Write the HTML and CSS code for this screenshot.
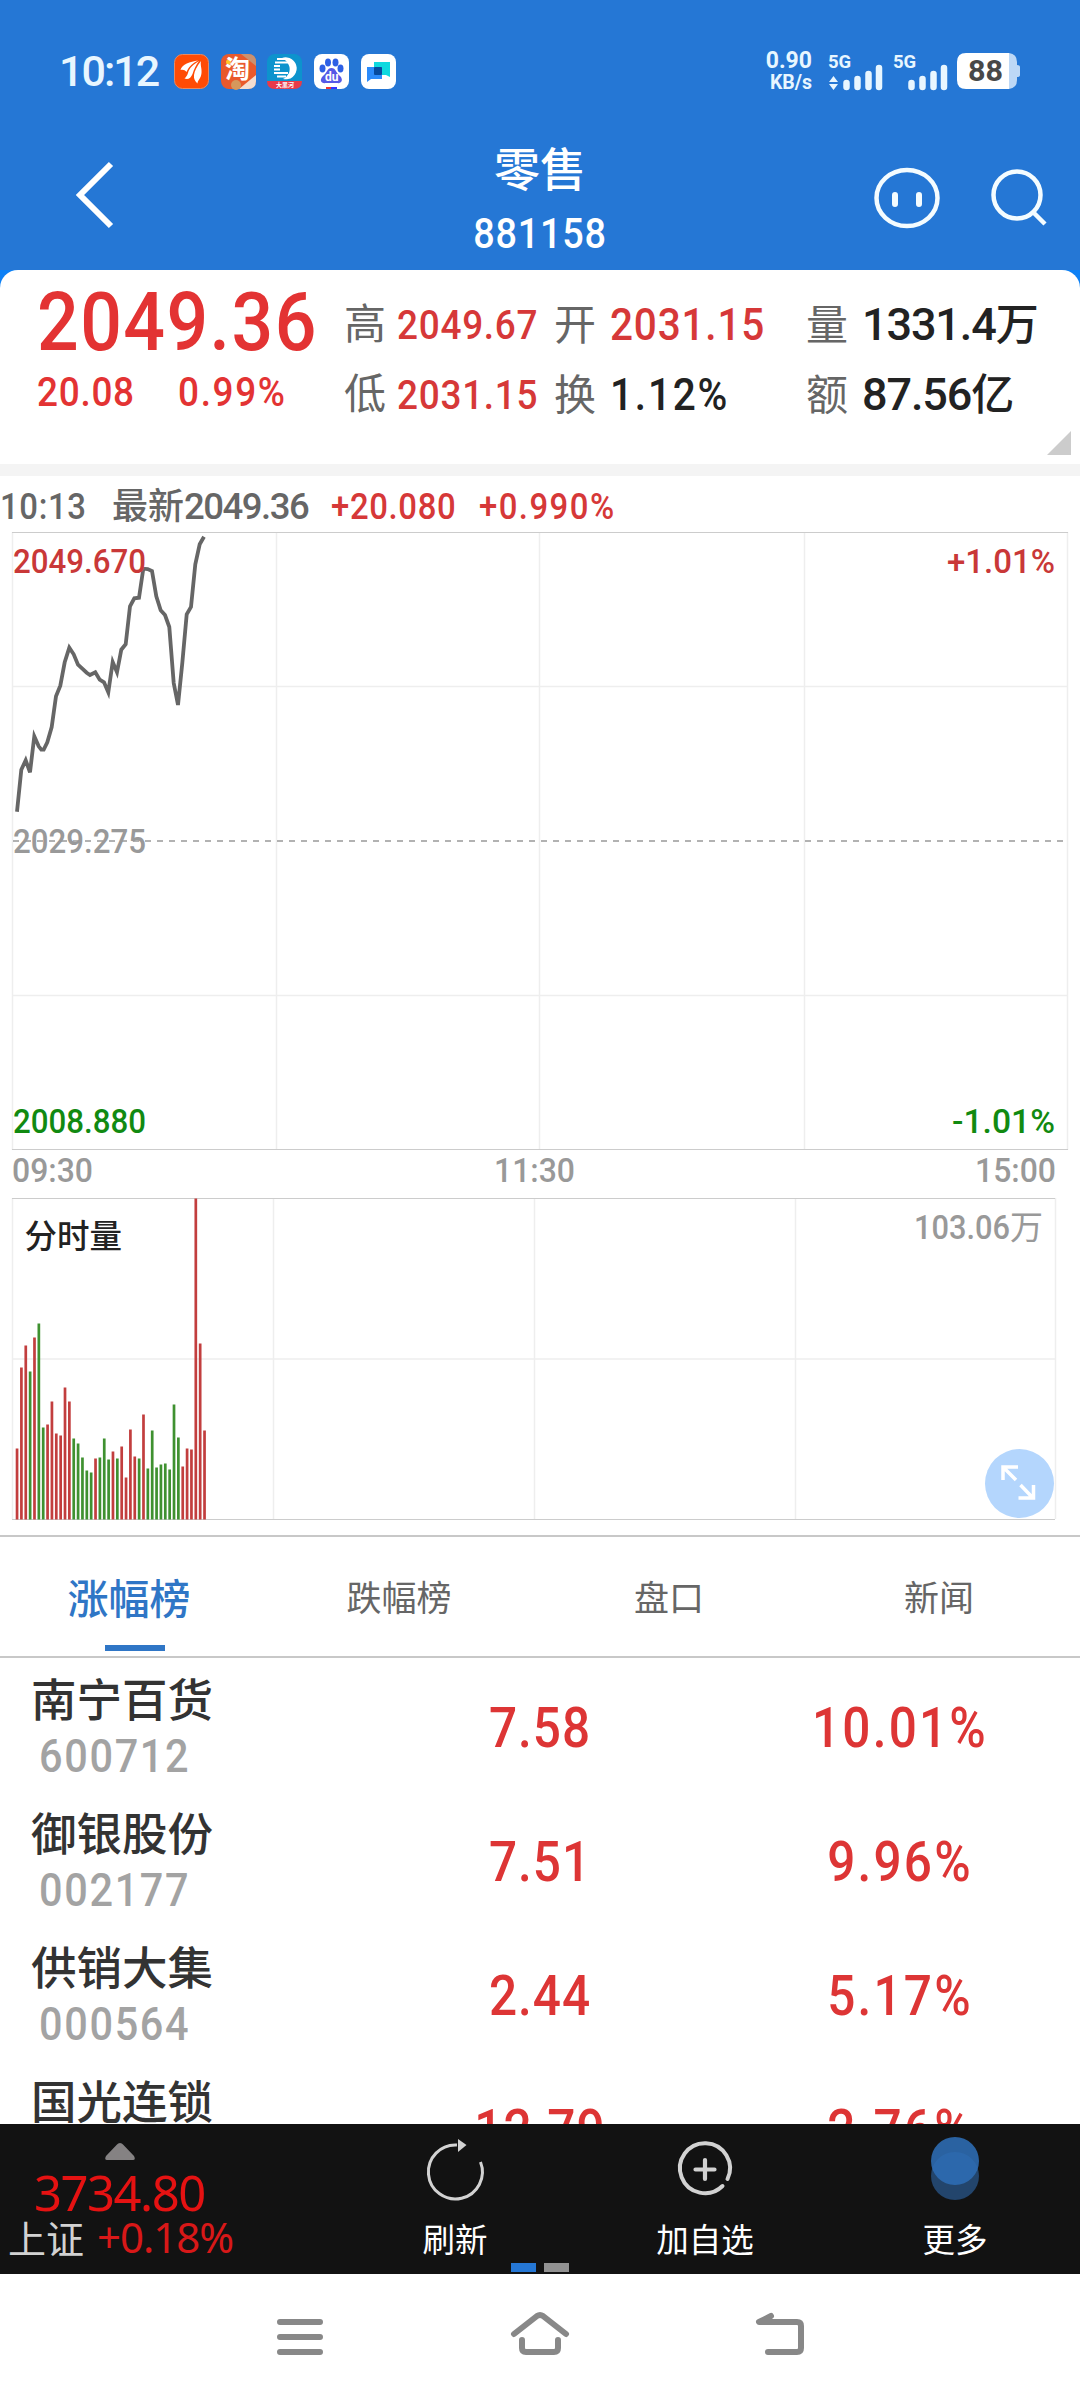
FILE: index.html
```html
<!DOCTYPE html>
<html lang="zh-CN">
<head>
    <meta charset="UTF-8">
    <meta name="viewport" content="width=device-width, initial-scale=1.0">
    <title>零售 881158</title>
    <link rel="stylesheet" href="styles.css">
</head>
<body>
    <header class="header">
        <div class="status">
            <span class="clock">10:12</span>
            <div class="apps">
                <svg width="35" height="35" viewBox="0 0 35 35">
                    <rect x=".5" y=".5" width="34" height="34" rx="8" fill="#ff4b05" stroke="#e98a62"/>
                    <path d="M6.500 16C8 10 16 8 24 6.500C19 9 15 12 12.500 18C11 16 9 15.500 6.500 16Z" fill="#fff"/>
                    <path d="M25 7C20 10 15 14 14 19C13 22 12 23 10.500 24.500C14 26 17 24 18.500 20C20 15 22 11 25 7Z" fill="#fff"/>
                    <path d="M27 7C23 12 20.500 17 20 21C19.500 25 21 27 23.500 29.500C23.500 26 27 25 27.500 19C28 14 26 11 27 7Z" fill="#fff"/>
                </svg>
                <svg width="35" height="35" viewBox="0 0 35 35">
                    <rect width="35" height="35" rx="8" fill="#e9592c"/>
                    <path d="M20 0H27Q35 0 35 8V12Z" fill="#c99170"/>
                    <path d="M35 21V27Q35 35 27 35H18Z" fill="#f3ddd2"/>
                    <circle cx="15" cy="31" r="5" fill="#d6985c"/>
                    <circle cx="7.500" cy="8" r="2.500" fill="#ffc629"/>
                    <text class="tao" x="4" y="24">淘</text>
                </svg>
                <svg width="35" height="35" viewBox="0 0 35 35">
                    <rect width="35" height="35" rx="8" fill="#0d93cd"/>
                    <path d="M0 27H35Q35 35 27 35H8Q0 35 0 27Z" fill="#e83a49"/>
                    <path d="M15 4A11 11 0 1 1 16 25C19 24 20 22 22 19C24 14 22 8 15 4Z" fill="#fff"/>
                    <path d="M10 5H20M8 8.500H21M7 12H13M7 15.500H13M7 19H21M10 22.500H19" stroke="#fff" stroke-width="1.800"/>
                    <text class="tiny" x="9" y="33">大黑河</text>
                </svg>
                <svg width="35" height="35" viewBox="0 0 35 35">
                    <rect width="35" height="35" rx="8" fill="#fff"/>
                    <g fill="#2d5fe5">
                        <ellipse cx="8.500" cy="14.500" rx="3" ry="4"/>
                        <ellipse cx="14" cy="8.500" rx="3" ry="4"/>
                        <ellipse cx="21.500" cy="8.500" rx="3" ry="4"/>
                        <ellipse cx="26.500" cy="14.500" rx="3" ry="4"/>
                        <path d="M17.500 14C22 14 22 19 26 22C30 26 27 30 23 29H12C7 30 5 26 9 22C13 19 13 14 17.500 14Z" fill="#5558e6"/>
                    </g>
                    <text class="du" x="11" y="27">du</text>
                    <path d="M12 34H17" stroke="#e33" stroke-width="2"/>
                    <path d="M17 34H23" stroke="#33f" stroke-width="2"/>
                </svg>
                <svg width="35" height="35" viewBox="0 0 35 35">
                    <rect width="35" height="35" rx="8" fill="#fff"/>
                    <path d="M13 8H29V23L25 21H13Z" fill="#0fd9df"/>
                    <path d="M6 13H21V25H10L6 28Z" fill="#2b8bfb"/>
                    <rect x="13" y="13" width="8" height="8" rx="1" fill="#064a9e"/>
                </svg>
            </div>
            <div class="speed"><span>0.90</span><small>KB/s</small></div>
            <svg class="signal" width="54" height="38" viewBox="0 0 54 38">
                <text class="net" x="0" y="15.500">5G</text>
                <path d="M5.500 24L10 30H1ZM5.500 38L10 32H1Z" fill="#e8f6ff"/>
                <path d="M18.500 31V35M29.500 27V35M40.500 22V35M51 16V35" class="bars"/>
            </svg>
            <svg class="signal second" width="54" height="38" viewBox="0 0 54 38">
                <text class="net" x="0" y="15.500">5G</text>
                <path d="M18.500 31V35M29.500 27V35M40.500 22V35M51 16V35" class="bars"/>
            </svg>
            <svg class="battery" width="63" height="36" viewBox="0 0 63 36">
                <path d="M52 0Q60 1 60 9V12Q63 12 63 14V22Q63 24 60 24V27Q60 35 52 36Z" fill="#bdd8f6"/>
                <path d="M52 0H9Q0 0 0 9V27Q0 36 9 36H52Z" fill="#fff"/>
                <text x="11" y="28" textLength="35" lengthAdjust="spacingAndGlyphs">88</text>
            </svg>
        </div>
        <div class="titlebar">
            <svg class="back" width="40" height="68" viewBox="0 0 40 68">
                <path d="M36 3L5 34L36 65"/>
            </svg>
            <div class="title">
                <h1>零售</h1>
                <span class="num">881158</span>
            </div>
            <svg class="face" width="68" height="64" viewBox="0 0 68 64">
                <ellipse cx="34" cy="32" rx="30.500" ry="28"/>
                <path d="M22 29V38M46 29V38" stroke-width="6" stroke-linecap="round"/>
            </svg>
            <svg class="search" width="58" height="58" viewBox="0 0 58 58">
                <circle cx="27" cy="27" r="23.500"/>
                <path d="M43 44L55 56"/>
            </svg>
        </div>
    </header>

    <div class="corners">
        <section class="quote">
            <div class="last">
                <div class="price num">2049.36</div>
                <div class="change"><span class="num">20.08</span><span class="num pct">0.99%</span></div>
            </div>
            <dl class="stats">
                <div class="stat small"><dt>高</dt><dd class="num red">2049.67</dd></div>
                <div class="stat"><dt>开</dt><dd class="num red">2031.15</dd></div>
                <div class="stat"><dt>量</dt><dd class="unit">1331.4<i>万</i></dd></div>
                <div class="stat small"><dt>低</dt><dd class="num red">2031.15</dd></div>
                <div class="stat"><dt>换</dt><dd class="num pct">1.12%</dd></div>
                <div class="stat"><dt>额</dt><dd class="unit">87.56<i>亿</i></dd></div>
            </dl>
            <svg class="expand" width="24" height="24" viewBox="0 0 24 24"><path d="M24 0V24H0Z" fill="#ccc"/></svg>
        </section>
    </div>

    <div class="latest">
        <span class="num time">10:13</span>
        <span class="now"><i>最新</i>2049.36</span>
        <span class="num red diff">+20.080</span>
        <span class="num red pct">+0.990%</span>
    </div>

    <svg class="chart" width="1080" height="666" viewBox="0 0 1080 666">
        <path class="grid" d="M12.500 0V618M276.500 0V618M539.500 0V618M804.500 0V618M1067.500 0V618M13 154.500H1067M13 463.500H1067"/>
        <path class="frame" d="M12 .5H1068M12 617.500H1068"/>
        <path class="middle" d="M13 309H1067"/>
        <polyline class="line" points="17,279.700 21.300,237.700 25.700,228.300 30,240.300 34.300,204.300 38.700,214.300 41.300,217.700 43.700,217.700 47.300,210.300 51.700,195 56,164.300 60.300,153.700 64.700,130.300 69.300,115.700 73.700,122.300 78,132.700 82.300,136.700 86.700,140.700 90,143 95.300,140.300 99.700,147.700 104,150.300 108.300,160.300 112.700,130 117,140.300 121.300,117.700 125.700,112.300 130,74.300 134.300,66.300 139,65.700 143.300,36.700 147.700,37 152,39 156.300,64.300 160.700,78.300 165,83 169.300,95 173.700,151 178,173 182.300,131 186.700,82.300 191,75 195.300,32.300 199.700,12.300 204,4.700"/>
        <text x="13" y="40.500" textLength="133" lengthAdjust="spacingAndGlyphs" class="high">2049.670</text>
        <text x="13" y="320.500" textLength="133" lengthAdjust="spacingAndGlyphs">2029.275</text>
        <text x="13" y="600.500" textLength="133" lengthAdjust="spacingAndGlyphs" class="low">2008.880</text>
        <text x="947" y="40.500" textLength="108" lengthAdjust="spacingAndGlyphs" class="high">+1.01%</text>
        <text x="952" y="600.500" textLength="103" lengthAdjust="spacingAndGlyphs" class="low">-1.01%</text>
        <text x="12" y="649.500" textLength="81" lengthAdjust="spacingAndGlyphs">09:30</text>
        <text x="494" y="649.500" textLength="81" lengthAdjust="spacingAndGlyphs">11:30</text>
        <text x="975" y="649.500" textLength="81" lengthAdjust="spacingAndGlyphs">15:00</text>
    </svg>

    <svg class="chart" width="1080" height="337" viewBox="0 0 1080 337">
        <path class="grid" d="M12.500 0V321M273.500 0V321M534.500 0V321M795.500 0V321M1055.500 0V321M13 161H1055"/>
        <path class="frame" d="M12 .5H1055M12 321.500H1055"/>
        <g id="volume"></g>
        <text class="name" x="24.500" y="50">分时量</text>
        <text x="914" y="41" textLength="96" lengthAdjust="spacingAndGlyphs">103.06</text>
        <text class="wan" x="1010" y="41">万</text>
        <circle cx="1019.500" cy="285.500" r="34.500" fill="#b4d6fd"/>
        <path class="zoom" d="M1018 269H1003V282M1004 270L1016 282M1018.500 300H1033.500V287M1032 299L1020.500 287"/>
    </svg>

    <nav class="tabs">
        <a class="active">涨幅榜</a>
        <a>跌幅榜</a>
        <a>盘口</a>
        <a>新闻</a>
    </nav>

    <main class="list">
        <div class="row">
            <div class="stock"><b>南宁百货</b><span class="num">600712</span></div>
            <span class="num val">7.58</span>
            <span class="num pct val">10.01%</span>
        </div>
        <div class="row">
            <div class="stock"><b>御银股份</b><span class="num">002177</span></div>
            <span class="num val">7.51</span>
            <span class="num pct val">9.96%</span>
        </div>
        <div class="row">
            <div class="stock"><b>供销大集</b><span class="num">000564</span></div>
            <span class="num val">2.44</span>
            <span class="num pct val">5.17%</span>
        </div>
        <div class="row">
            <div class="stock"><b>国光连锁</b></div>
            <span class="num val">12.79</span>
            <span class="num pct val">2.76%</span>
        </div>
    </main>

    <footer class="toolbar">
        <div class="index">
            <svg width="30" height="17" viewBox="0 0 30 17"><path d="M15 0Q17 0 18 1.500L29 13Q31 17 28 17H2Q-1 17 1 13L12 1.500Q13 0 15 0Z" fill="#858283"/></svg>
            <span class="index-value">3734.80</span>
            <span class="index-name">上证<em>+0.18%</em></span>
        </div>
        <div class="tool">
            <svg width="64" height="70" viewBox="0 0 64 70">
                <path d="M34 10A27 27 0 1 0 57.500 27" fill="none" stroke="#d2d2d2" stroke-width="3"/>
                <path d="M35 4L43.500 10L35 17Z" fill="#d2d2d2"/>
            </svg>
            刷新
        </div>
        <div class="tool add">
            <svg width="64" height="70" viewBox="0 0 64 70">
                <path d="M54.500 44A25 25 0 1 0 49.500 51" fill="none" stroke="#d2d2d2" stroke-width="4" stroke-linecap="round"/>
                <path d="M32 25V44M22.500 34.500H41.500" stroke="#d2d2d2" stroke-width="4.200" stroke-linecap="round"/>
            </svg>
            加自选
        </div>
        <div class="tool more">
            <svg width="64" height="70" viewBox="0 0 64 70">
                <circle cx="32" cy="41" r="24" fill="#23456c"/>
                <circle cx="32" cy="26" r="24" fill="#2e6db5" fill-opacity=".88"/>
            </svg>
            更多
        </div>
        <div class="pager"><i></i><i></i></div>
    </footer>

    <div class="sysnav">
        <svg width="54" height="54" viewBox="0 0 54 54"><path d="M7 12H47M7 27H47M7 42H47"/></svg>
        <svg width="60" height="54" viewBox="0 0 60 54"><path d="M4 24L27 6Q30 4 33 6L56 24M12 30V38Q12 42 16 42H44Q48 42 48 38V30"/></svg>
        <svg width="54" height="54" viewBox="0 0 54 54"><path d="M18 6L6 12H44Q48 12 48 16V38Q48 42 44 42H15"/></svg>
    </div>

    <script src="script.js"></script>
</body>
</html>
```
FILE: script.js
```js
// minute volumes, negative = falling minute
const volumes = [
    71, 152, 174, -148, 182, -196, -92, 95, 118, 86, 84, 132, 118, -81, -76,
    -62, -49, -47, 61, -62, -81, -60, 68, -61, 73, 42, 90, 63, -61, 105, -51,
    -89, -52, -55, -56, -50, -115, -82, 53, 71, 70, 321, 176, 89
];

const group = document.getElementById('volume');

volumes.forEach((v, i) => {
    const bar = document.createElementNS('http://www.w3.org/2000/svg', 'rect');
    const h = Math.abs(v);
    bar.setAttribute('x', 15.7 + i * 4.36);
    bar.setAttribute('y', 321.5 - h);
    bar.setAttribute('width', 2.7);
    bar.setAttribute('height', h);
    bar.setAttribute('class', v < 0 ? 'down' : 'up');
    group.appendChild(bar);
});
```
FILE: styles.css
```css
* {
    box-sizing: border-box;
}
body {
    margin: 0;
    width: 1080px;
    height: 2400px;
    overflow: hidden;
    background: #fff;
    color: #222;
    font-family: Roboto, "Noto Sans CJK SC", sans-serif;
}
svg {
    display: block;
    flex: none;
    overflow: visible;
}
i, em {
    font-style: normal;
}
/* narrow digits */
.num {
    font-weight: 500;
    letter-spacing: 0.02em;
    white-space: nowrap;
    transform: scaleX(0.9);
    transform-origin: left;
}
.num.pct {
    letter-spacing: 0.045em;
}
.red {
    color: #d63838;
}

/* header */
.header {
    height: 270px;
    background: #2577d5;
    color: #fff;
}
.status {
    display: flex;
    height: 142px;
    padding: 0 60px 0 59px;
    align-items: center;
}
.clock {
    width: 115px;
    font-size: 43px;
    font-weight: 500;
    letter-spacing: -2px;
    color: #e8f6ff;
}
.apps {
    display: flex;
    gap: 11.700px;
}
.tao {
    font: 700 25px "Noto Sans CJK SC", sans-serif;
    fill: #fff;
}
.tiny {
    font: 700 6px "Noto Sans CJK SC", sans-serif;
    fill: #fff;
}
.du {
    font: 700 12px Roboto, sans-serif;
    fill: #fff;
}
.speed {
    display: flex;
    flex-direction: column;
    align-items: flex-end;
    margin-left: auto;
    width: 60px;
    font-size: 23px;
    font-weight: 700;
    line-height: 23px;
    color: #e8f6ff;
}
.speed small {
    font-size: 19.500px;
    line-height: 21px;
}
.signal {
    margin-left: 16px;
}
.signal.second {
    margin-left: 11px;
}
.net {
    font: 700 18.500px Roboto, sans-serif;
    fill: #e8f6ff;
}
.bars {
    stroke: #e8f6ff;
    stroke-width: 6.500;
    stroke-linecap: round;
}
.battery {
    margin-left: 10px;
}
.battery text {
    font: 700 29px Roboto, sans-serif;
    fill: #484848;
}
.titlebar {
    display: flex;
    align-items: flex-start;
    height: 128px;
}
.titlebar svg {
    fill: none;
    stroke: #f4fcff;
    stroke-width: 4.500;
}
.titlebar .back {
    margin: 19px 0 0 75px;
    stroke: #fff;
    stroke-width: 6;
}
.title {
    width: 260px;
    margin-left: 295px;
    padding-top: 1px;
    text-align: center;
}
.title h1 {
    margin: 0;
    font-size: 46px;
    font-weight: 500;
    line-height: 54px;
}
.title .num {
    display: block;
    font-size: 42px;
    line-height: 74px;
    transform-origin: center;
}
.titlebar .face {
    margin: 24px 0 0 203px;
}
.titlebar .search {
    margin: 26px 0 0 49px;
}

/* quote */
.corners {
    background: #0d80f5;
}
.quote {
    display: flex;
    position: relative;
    height: 206px;
    border-bottom: 12px solid #f4f4f4;
    border-radius: 18px 18px 0 0;
    background: #fff;
}
.last {
    width: 344px;
    padding: 12px 0 0 37px;
    color: #e33333;
}
.price {
    font-size: 81.500px;
    line-height: 80px;
}
.change {
    display: flex;
    font-size: 41px;
    line-height: 61px;
}
.change span:first-child {
    width: 141px;
}
.stats {
    display: grid;
    grid-template-columns: 210px 252px 274px;
    grid-template-rows: 70px 70px;
    margin: 16.500px 0 0;
}
.stat {
    display: flex;
    align-items: baseline;
    font-size: 45px;
    line-height: 76px;
}
.stat dt {
    width: 56px;
    font-size: 42px;
    color: #666;
}
.stat dd {
    margin: 0;
}
.stat dd i {
    font-size: 43px;
    letter-spacing: 0;
}
.stat .unit {
    font-weight: 500;
    letter-spacing: -0.025em;
}
.stat.small dd {
    font-size: 41px;
}
.expand {
    position: absolute;
    right: 9px;
    bottom: 9px;
}
.latest {
    display: flex;
    height: 56px;
    font-size: 36.500px;
    line-height: 62px;
    color: #666;
}
.latest .time {
    width: 112px;
}
.latest .now {
    width: 219px;
    font-weight: 500;
    letter-spacing: -1.500px;
}
.latest i {
    font-size: 36px;
    letter-spacing: 0;
}
.latest .diff {
    width: 148px;
}

/* charts */
.chart text {
    font-size: 33.500px;
    font-weight: 500;
    fill: #999;
}
.chart .high {
    fill: #c93838;
}
.chart .low {
    fill: #118a11;
}
.grid {
    fill: none;
    stroke: #eee;
    stroke-width: 1.500;
}
.frame {
    stroke: #ccc;
}
.middle {
    stroke: #999;
    stroke-width: 1.500;
    stroke-dasharray: 6 6;
}
.line {
    fill: none;
    stroke: #666;
    stroke-width: 3.800;
}
.up {
    fill: #c23e3e;
}
.down {
    fill: #3f9130;
}
.chart .wan {
    font-size: 33px;
    font-weight: 400;
}
.chart .name {
    font-size: 32.500px;
    fill: #222;
}
.zoom {
    fill: none;
    stroke: #fff;
    stroke-width: 3.500;
}

/* tabs */
.tabs {
    display: grid;
    grid-template-columns: 258px 282px 258px 282px;
    height: 123px;
    border-top: 2px solid #c8c8c8;
    border-bottom: 2px solid #c8c8c8;
    font-size: 35px;
    line-height: 126px;
    text-align: center;
    color: #666;
}
.tabs .active {
    font-size: 41px;
    font-weight: 500;
    color: #2f76c6;
}
.tabs .active::after {
    content: "";
    display: block;
    width: 60px;
    height: 6px;
    margin: -18px 0 0 105px;
    background: #2f76c6;
}

/* list */
.list {
    height: 466px;
    overflow: hidden;
}
.row {
    display: grid;
    grid-template-columns: 360px 360px 360px;
    height: 134px;
}
.stock {
    display: flex;
    flex-direction: column;
    padding: 12.500px 0 0 31px;
}
.stock b {
    font-size: 45.500px;
    font-weight: 500;
    line-height: 62px;
    color: #333;
}
.stock .num {
    padding-left: 9px;
    font-size: 46px;
    line-height: 46px;
    letter-spacing: 0.04em;
    color: #a3a3a3;
}
.val {
    font-size: 55px;
    line-height: 140px;
    text-align: center;
    color: #dd3535;
    transform-origin: center;
}

/* toolbar */
.toolbar {
    display: flex;
    position: relative;
    height: 150px;
    background: #121212;
    color: #fff;
    font-size: 32.500px;
}
.index {
    display: flex;
    flex-direction: column;
    width: 372px;
    padding: 19px 0 0 8px;
    font-family: "Noto Sans", "Noto Sans CJK SC", sans-serif;
}
.index svg {
    margin-left: 97px;
}
.index-value {
    margin-left: 26px;
    font-size: 49px;
    line-height: 64px;
    letter-spacing: -1.500px;
    color: #e51212;
}
.index-name {
    margin-top: -13px;
    font-size: 38px;
    line-height: 52px;
    color: #d2d2d2;
}
.index-name em {
    margin-left: 13px;
    font-size: 42px;
    letter-spacing: -1px;
    color: #d81818;
}
.tool {
    display: flex;
    flex-direction: column;
    align-items: center;
    width: 166px;
    padding-top: 11px;
    line-height: 73px;
}
.tool.add {
    width: 334px;
}
.pager {
    display: flex;
    position: absolute;
    left: 511px;
    bottom: 2px;
    gap: 8px;
}
.pager i {
    width: 25px;
    height: 9px;
    background: #2577d5;
}
.pager i + i {
    background: #929292;
}

/* system navigation */
.sysnav {
    display: flex;
    justify-content: center;
    gap: 183px;
    height: 126px;
    padding-top: 36px;
}
.sysnav svg {
    fill: none;
    stroke: #888;
    stroke-width: 6;
    stroke-linecap: round;
    stroke-linejoin: round;
}
```
